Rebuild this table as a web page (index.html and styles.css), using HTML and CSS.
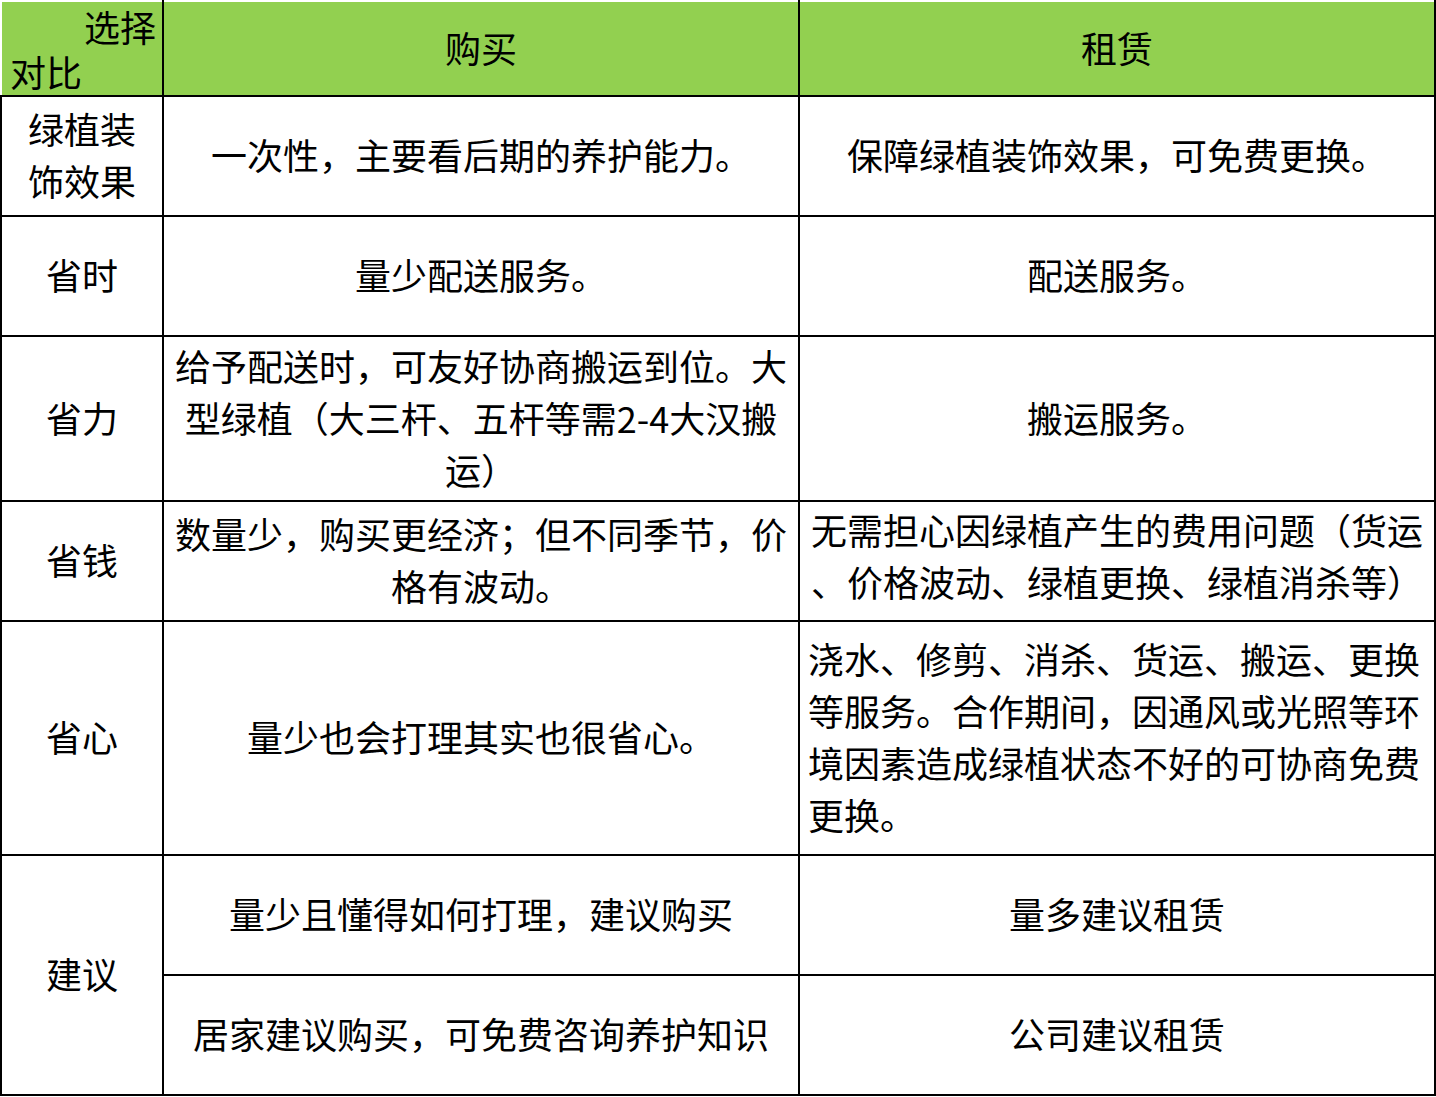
FILE: index.html
```html
<!DOCTYPE html>
<html lang="zh-CN">
<head>
<meta charset="utf-8">
<title>购买与租赁对比</title>
<link rel="stylesheet" href="styles.css">
</head>
<body>
<table class="compare">
  <colgroup>
    <col class="c1">
    <col class="c2">
    <col class="c3">
  </colgroup>
  <thead>
    <tr class="r-head">
      <th class="corner">
        <div class="corner-box">
          <div class="corner-top">选择</div>
          <div class="corner-bottom">对比</div>
        </div>
      </th>
      <th>购买</th>
      <th class="last">租赁</th>
    </tr>
  </thead>
  <tbody>
    <tr class="r-120">
      <td class="label">绿植装<br>饰效果</td>
      <td>一次性，主要看后期的养护能力。</td>
      <td>保障绿植装饰效果，可免费更换。</td>
    </tr>
    <tr class="r-120">
      <td class="label">省时</td>
      <td>量少配送服务。</td>
      <td>配送服务。</td>
    </tr>
    <tr class="r-165">
      <td class="label">省力</td>
      <td>给予配送时，可友好协商搬运到位。大<br>型绿植（大三杆、五杆等需2-4大汉搬<br>运）</td>
      <td>搬运服务。</td>
    </tr>
    <tr class="r-120">
      <td class="label">省钱</td>
      <td>数量少，购买更经济；但不同季节，价<br>格有波动。</td>
      <td class="tight">无需担心因绿植产生的费用问题（货运<br>、价格波动、绿植更换、绿植消杀等）</td>
    </tr>
    <tr class="r-234">
      <td class="label">省心</td>
      <td>量少也会打理其实也很省心。</td>
      <td class="left">浇水、修剪、消杀、货运、搬运、更换<br>等服务。合作期间，因通风或光照等环<br>境因素造成绿植状态不好的可协商免费<br>更换。</td>
    </tr>
    <tr class="r-120">
      <td class="label" rowspan="2">建议</td>
      <td>量少且懂得如何打理，建议购买</td>
      <td>量多建议租赁</td>
    </tr>
    <tr class="r-120">
      <td>居家建议购买，可免费咨询养护知识</td>
      <td>公司建议租赁</td>
    </tr>
  </tbody>
</table>
</body>
</html>
```

FILE: styles.css
```css
html, body {
  margin: 0;
  padding: 0;
  background: #ffffff;
}

body {
  font-family: "Noto Sans CJK SC", "Noto Sans", sans-serif;
  color: #000000;
}

.compare {
  width: 1435px;
  border-collapse: collapse;
  table-layout: fixed;
  font-size: 36px;
  line-height: 52px;
}

.c1 { width: 162px; }
.c2 { width: 636px; }
.c3 { width: 636px; }

.compare th,
.compare td {
  border: 2px solid #000000;
  padding: 0 10px 4px;
  text-align: center;
  vertical-align: middle;
  font-weight: 400;
  white-space: nowrap;
}

.compare th {
  background: #92d050;
  border-top-color: #ffffff;
}

.compare th.corner {
  border-left-color: #ffffff;
  padding: 0;
}

.r-head { height: 95px; }
.r-120 { height: 120px; }
.r-165 { height: 165px; }
.r-234 { height: 234px; }

.corner-box {
  display: flex;
  flex-direction: column;
  padding: 0 6px 0 8px;
  line-height: 45px;
}

.corner-top { text-align: right; }
.corner-bottom { text-align: left; }

.compare td.label {
  padding: 0 0 4px;
}

.compare td.left {
  text-align: left;
  padding-left: 8px;
}

.compare td.tight {
  padding: 0 6px 12px;
}
```
